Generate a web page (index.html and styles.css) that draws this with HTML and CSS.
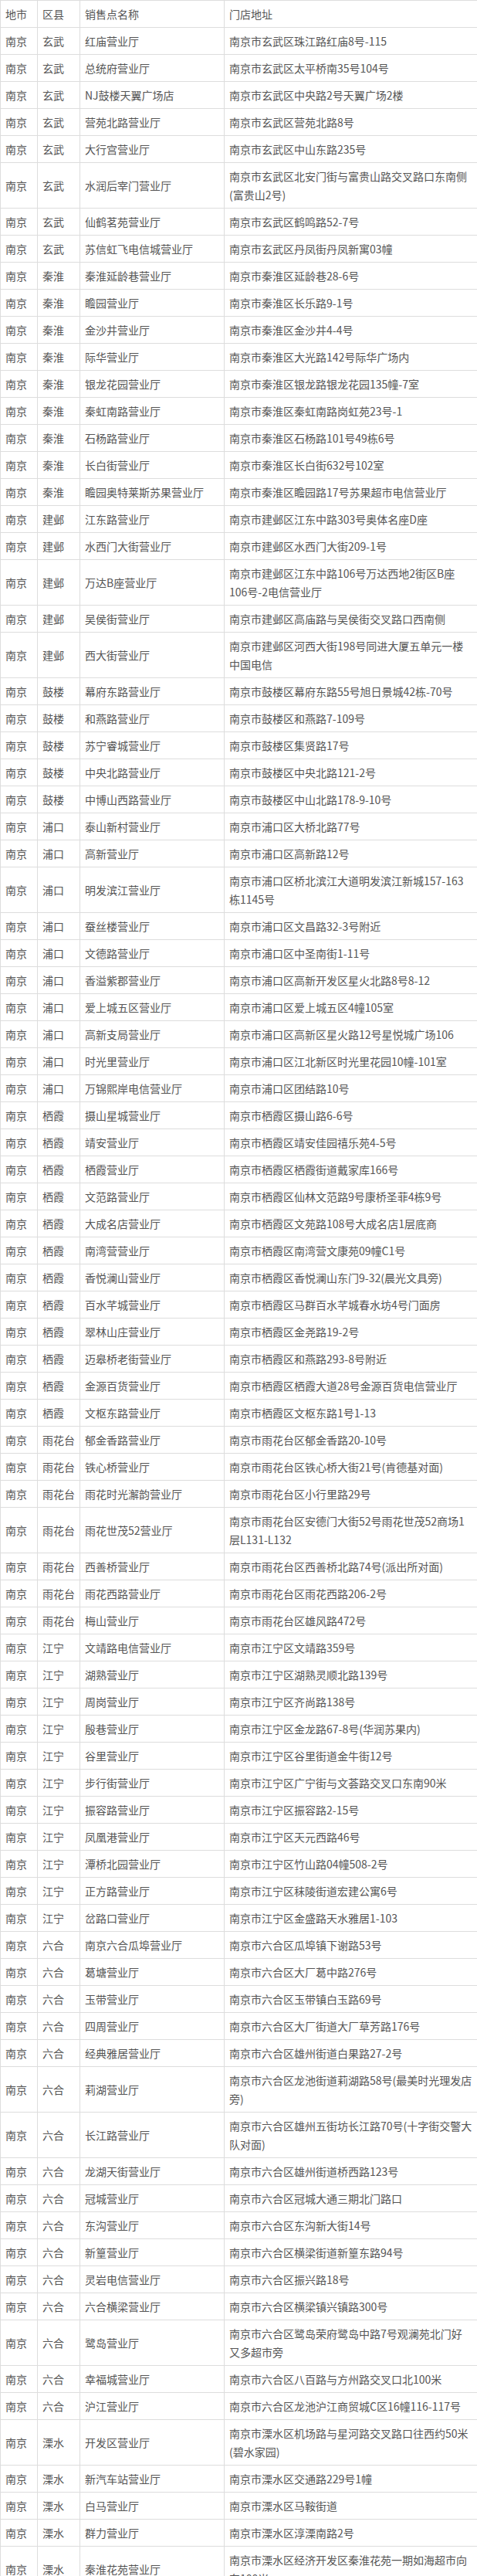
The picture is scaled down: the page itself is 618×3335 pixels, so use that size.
FILE: index.html
```html
<!DOCTYPE html>
<html lang="zh-CN">
<head>
<meta charset="utf-8">
<title>营业厅地址</title>
<link rel="stylesheet" href="styles.css">
</head>
<body>
<table class="shops">
<colgroup><col class="c-city"><col class="c-dist"><col class="c-name"><col class="c-addr"></colgroup>
<tbody>
<tr><td>地市</td><td>区县</td><td>销售点名称</td><td>门店地址</td></tr>
<tr><td>南京</td><td>玄武</td><td>红庙营业厅</td><td>南京市玄武区珠江路红庙8号-115</td></tr>
<tr><td>南京</td><td>玄武</td><td>总统府营业厅</td><td>南京市玄武区太平桥南35号104号</td></tr>
<tr><td>南京</td><td>玄武</td><td>NJ鼓楼天翼广场店</td><td>南京市玄武区中央路2号天翼广场2楼</td></tr>
<tr><td>南京</td><td>玄武</td><td>营苑北路营业厅</td><td>南京市玄武区营苑北路8号</td></tr>
<tr><td>南京</td><td>玄武</td><td>大行宫营业厅</td><td>南京市玄武区中山东路235号</td></tr>
<tr><td>南京</td><td>玄武</td><td>水润后宰门营业厅</td><td>南京市玄武区北安门街与富贵山路交叉路口东南侧(富贵山2号)</td></tr>
<tr><td>南京</td><td>玄武</td><td>仙鹤茗苑营业厅</td><td>南京市玄武区鹤鸣路52-7号</td></tr>
<tr><td>南京</td><td>玄武</td><td>苏信虹飞电信城营业厅</td><td>南京市玄武区丹凤街丹凤新寓03幢</td></tr>
<tr><td>南京</td><td>秦淮</td><td>秦淮延龄巷营业厅</td><td>南京市秦淮区延龄巷28-6号</td></tr>
<tr><td>南京</td><td>秦淮</td><td>瞻园营业厅</td><td>南京市秦淮区长乐路9-1号</td></tr>
<tr><td>南京</td><td>秦淮</td><td>金沙井营业厅</td><td>南京市秦淮区金沙井4-4号</td></tr>
<tr><td>南京</td><td>秦淮</td><td>际华营业厅</td><td>南京市秦淮区大光路142号际华广场内</td></tr>
<tr><td>南京</td><td>秦淮</td><td>银龙花园营业厅</td><td>南京市秦淮区银龙路银龙花园135幢-7室</td></tr>
<tr><td>南京</td><td>秦淮</td><td>秦虹南路营业厅</td><td>南京市秦淮区秦虹南路岗虹苑23号-1</td></tr>
<tr><td>南京</td><td>秦淮</td><td>石杨路营业厅</td><td>南京市秦淮区石杨路101号49栋6号</td></tr>
<tr><td>南京</td><td>秦淮</td><td>长白街营业厅</td><td>南京市秦淮区长白街632号102室</td></tr>
<tr><td>南京</td><td>秦淮</td><td>瞻园奥特莱斯苏果营业厅</td><td>南京市秦淮区瞻园路17号苏果超市电信营业厅</td></tr>
<tr><td>南京</td><td>建邺</td><td>江东路营业厅</td><td>南京市建邺区江东中路303号奥体名座D座</td></tr>
<tr><td>南京</td><td>建邺</td><td>水西门大街营业厅</td><td>南京市建邺区水西门大街209-1号</td></tr>
<tr><td>南京</td><td>建邺</td><td>万达B座营业厅</td><td>南京市建邺区江东中路106号万达西地2街区B座106号-2电信营业厅</td></tr>
<tr><td>南京</td><td>建邺</td><td>吴侯街营业厅</td><td>南京市建邺区高庙路与吴侯街交叉路口西南侧</td></tr>
<tr><td>南京</td><td>建邺</td><td>西大街营业厅</td><td>南京市建邺区河西大街198号同进大厦五单元一楼中国电信</td></tr>
<tr><td>南京</td><td>鼓楼</td><td>幕府东路营业厅</td><td>南京市鼓楼区幕府东路55号旭日景城42栋-70号</td></tr>
<tr><td>南京</td><td>鼓楼</td><td>和燕路营业厅</td><td>南京市鼓楼区和燕路7-109号</td></tr>
<tr><td>南京</td><td>鼓楼</td><td>苏宁睿城营业厅</td><td>南京市鼓楼区集贤路17号</td></tr>
<tr><td>南京</td><td>鼓楼</td><td>中央北路营业厅</td><td>南京市鼓楼区中央北路121-2号</td></tr>
<tr><td>南京</td><td>鼓楼</td><td>中博山西路营业厅</td><td>南京市鼓楼区中山北路178-9-10号</td></tr>
<tr><td>南京</td><td>浦口</td><td>泰山新村营业厅</td><td>南京市浦口区大桥北路77号</td></tr>
<tr><td>南京</td><td>浦口</td><td>高新营业厅</td><td>南京市浦口区高新路12号</td></tr>
<tr><td>南京</td><td>浦口</td><td>明发滨江营业厅</td><td>南京市浦口区桥北滨江大道明发滨江新城157-163栋1145号</td></tr>
<tr><td>南京</td><td>浦口</td><td>蚕丝楼营业厅</td><td>南京市浦口区文昌路32-3号附近</td></tr>
<tr><td>南京</td><td>浦口</td><td>文德路营业厅</td><td>南京市浦口区中圣南街1-11号</td></tr>
<tr><td>南京</td><td>浦口</td><td>香溢紫郡营业厅</td><td>南京市浦口区高新开发区星火北路8号8-12</td></tr>
<tr><td>南京</td><td>浦口</td><td>爱上城五区营业厅</td><td>南京市浦口区爱上城五区4幢105室</td></tr>
<tr><td>南京</td><td>浦口</td><td>高新支局营业厅</td><td>南京市浦口区高新区星火路12号星悦城广场106</td></tr>
<tr><td>南京</td><td>浦口</td><td>时光里营业厅</td><td>南京市浦口区江北新区时光里花园10幢-101室</td></tr>
<tr><td>南京</td><td>浦口</td><td>万锦熙岸电信营业厅</td><td>南京市浦口区团结路10号</td></tr>
<tr><td>南京</td><td>栖霞</td><td>摄山星城营业厅</td><td>南京市栖霞区摄山路6-6号</td></tr>
<tr><td>南京</td><td>栖霞</td><td>靖安营业厅</td><td>南京市栖霞区靖安佳园禧乐苑4-5号</td></tr>
<tr><td>南京</td><td>栖霞</td><td>栖霞营业厅</td><td>南京市栖霞区栖霞街道戴家库166号</td></tr>
<tr><td>南京</td><td>栖霞</td><td>文范路营业厅</td><td>南京市栖霞区仙林文范路9号康桥圣菲4栋9号</td></tr>
<tr><td>南京</td><td>栖霞</td><td>大成名店营业厅</td><td>南京市栖霞区文苑路108号大成名店1层底商</td></tr>
<tr><td>南京</td><td>栖霞</td><td>南湾营营业厅</td><td>南京市栖霞区南湾营文康苑09幢C1号</td></tr>
<tr><td>南京</td><td>栖霞</td><td>香悦澜山营业厅</td><td>南京市栖霞区香悦澜山东门9-32(晨光文具旁)</td></tr>
<tr><td>南京</td><td>栖霞</td><td>百水芊城营业厅</td><td>南京市栖霞区马群百水芊城春水坊4号门面房</td></tr>
<tr><td>南京</td><td>栖霞</td><td>翠林山庄营业厅</td><td>南京市栖霞区金尧路19-2号</td></tr>
<tr><td>南京</td><td>栖霞</td><td>迈皋桥老街营业厅</td><td>南京市栖霞区和燕路293-8号附近</td></tr>
<tr><td>南京</td><td>栖霞</td><td>金源百货营业厅</td><td>南京市栖霞区栖霞大道28号金源百货电信营业厅</td></tr>
<tr><td>南京</td><td>栖霞</td><td>文枢东路营业厅</td><td>南京市栖霞区文枢东路1号1-13</td></tr>
<tr><td>南京</td><td>雨花台</td><td>郁金香路营业厅</td><td>南京市雨花台区郁金香路20-10号</td></tr>
<tr><td>南京</td><td>雨花台</td><td>铁心桥营业厅</td><td>南京市雨花台区铁心桥大街21号(肯德基对面)</td></tr>
<tr><td>南京</td><td>雨花台</td><td>雨花时光澥韵营业厅</td><td>南京市雨花台区小行里路29号</td></tr>
<tr><td>南京</td><td>雨花台</td><td>雨花世茂52营业厅</td><td>南京市雨花台区安德门大街52号雨花世茂52商场1层L131-L132</td></tr>
<tr><td>南京</td><td>雨花台</td><td>西善桥营业厅</td><td>南京市雨花台区西善桥北路74号(派出所对面)</td></tr>
<tr><td>南京</td><td>雨花台</td><td>雨花西路营业厅</td><td>南京市雨花台区雨花西路206-2号</td></tr>
<tr><td>南京</td><td>雨花台</td><td>梅山营业厅</td><td>南京市雨花台区雄风路472号</td></tr>
<tr><td>南京</td><td>江宁</td><td>文靖路电信营业厅</td><td>南京市江宁区文靖路359号</td></tr>
<tr><td>南京</td><td>江宁</td><td>湖熟营业厅</td><td>南京市江宁区湖熟灵顺北路139号</td></tr>
<tr><td>南京</td><td>江宁</td><td>周岗营业厅</td><td>南京市江宁区齐尚路138号</td></tr>
<tr><td>南京</td><td>江宁</td><td>殷巷营业厅</td><td>南京市江宁区金龙路67-8号(华润苏果内)</td></tr>
<tr><td>南京</td><td>江宁</td><td>谷里营业厅</td><td>南京市江宁区谷里街道金牛街12号</td></tr>
<tr><td>南京</td><td>江宁</td><td>步行街营业厅</td><td>南京市江宁区广宁街与文荟路交叉口东南90米</td></tr>
<tr><td>南京</td><td>江宁</td><td>振容路营业厅</td><td>南京市江宁区振容路2-15号</td></tr>
<tr><td>南京</td><td>江宁</td><td>凤凰港营业厅</td><td>南京市江宁区天元西路46号</td></tr>
<tr><td>南京</td><td>江宁</td><td>潭桥北园营业厅</td><td>南京市江宁区竹山路04幢508-2号</td></tr>
<tr><td>南京</td><td>江宁</td><td>正方路营业厅</td><td>南京市江宁区秣陵街道宏建公寓6号</td></tr>
<tr><td>南京</td><td>江宁</td><td>岔路口营业厅</td><td>南京市江宁区金盛路天水雅居1-103</td></tr>
<tr><td>南京</td><td>六合</td><td>南京六合瓜埠营业厅</td><td>南京市六合区瓜埠镇下谢路53号</td></tr>
<tr><td>南京</td><td>六合</td><td>葛塘营业厅</td><td>南京市六合区大厂葛中路276号</td></tr>
<tr><td>南京</td><td>六合</td><td>玉带营业厅</td><td>南京市六合区玉带镇白玉路69号</td></tr>
<tr><td>南京</td><td>六合</td><td>四周营业厅</td><td>南京市六合区大厂街道大厂草芳路176号</td></tr>
<tr><td>南京</td><td>六合</td><td>经典雅居营业厅</td><td>南京市六合区雄州街道白果路27-2号</td></tr>
<tr><td>南京</td><td>六合</td><td>莉湖营业厅</td><td>南京市六合区龙池街道莉湖路58号(最美时光理发店旁)</td></tr>
<tr><td>南京</td><td>六合</td><td>长江路营业厅</td><td>南京市六合区雄州五街坊长江路70号(十字街交警大队对面)</td></tr>
<tr><td>南京</td><td>六合</td><td>龙湖天街营业厅</td><td>南京市六合区雄州街道桥西路123号</td></tr>
<tr><td>南京</td><td>六合</td><td>冠城营业厅</td><td>南京市六合区冠城大通三期北门路口</td></tr>
<tr><td>南京</td><td>六合</td><td>东沟营业厅</td><td>南京市六合区东沟新大街14号</td></tr>
<tr><td>南京</td><td>六合</td><td>新篁营业厅</td><td>南京市六合区横梁街道新篁东路94号</td></tr>
<tr><td>南京</td><td>六合</td><td>灵岩电信营业厅</td><td>南京市六合区振兴路18号</td></tr>
<tr><td>南京</td><td>六合</td><td>六合横梁营业厅</td><td>南京市六合区横梁镇兴镇路300号</td></tr>
<tr><td>南京</td><td>六合</td><td>鹭岛营业厅</td><td>南京市六合区鹭岛荣府鹭岛中路7号观澜苑北门好又多超市旁</td></tr>
<tr><td>南京</td><td>六合</td><td>幸福城营业厅</td><td>南京市六合区八百路与方州路交叉口北100米</td></tr>
<tr><td>南京</td><td>六合</td><td>沪江营业厅</td><td>南京市六合区龙池沪江商贸城C区16幢116-117号</td></tr>
<tr><td>南京</td><td>溧水</td><td>开发区营业厅</td><td>南京市溧水区机场路与星河路交叉路口往西约50米(碧水家园)</td></tr>
<tr><td>南京</td><td>溧水</td><td>新汽车站营业厅</td><td>南京市溧水区交通路229号1幢</td></tr>
<tr><td>南京</td><td>溧水</td><td>白马营业厅</td><td>南京市溧水区马鞍街道</td></tr>
<tr><td>南京</td><td>溧水</td><td>群力营业厅</td><td>南京市溧水区淳溧南路2号</td></tr>
<tr><td>南京</td><td>溧水</td><td>秦淮花苑营业厅</td><td>南京市溧水区经济开发区秦淮花苑一期如海超市向东100米</td></tr>
</tbody>
</table>
</body>
</html>
```

FILE: styles.css
```css
html, body {
  margin: 0;
  padding: 0;
  background: #ffffff;
}

body {
  font-family: "Noto Sans CJK SC", "Noto Sans", "Liberation Sans", sans-serif;
  font-size: 14px;
  color: #555555;
}

.shops {
  width: 618px;
  border-collapse: collapse;
  table-layout: fixed;
}

.c-city { width: 48px; }
.c-dist { width: 55px; }
.c-name { width: 187px; }
.c-addr { width: 328px; }

.shops td {
  border: 1px solid #dddddd;
  padding: 5px 6px;
  line-height: 24px;
  vertical-align: middle;
  text-align: left;
}
```
